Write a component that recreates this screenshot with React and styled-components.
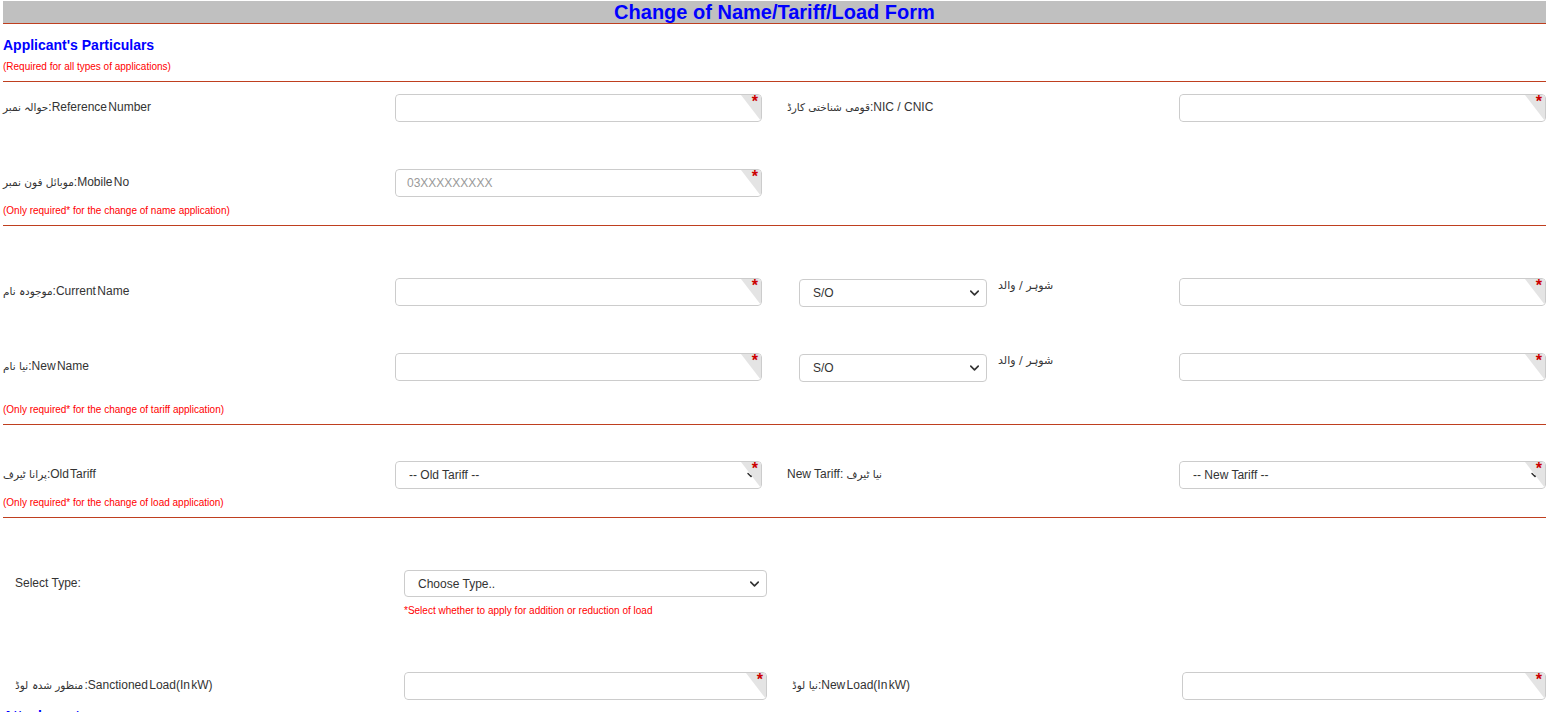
import React from 'react'
import styled, { createGlobalStyle } from 'styled-components'
import { ChevronDown } from 'lucide-react'

const Global = createGlobalStyle`
  body {
    margin: 0;
    background: #fff;
    font-family: "Liberation Sans", "DejaVu Sans", Arial, sans-serif;
    overflow: hidden;
  }
`

function App() {
  return (
    <>
      <Global />
      <Page>
        <TitleBar>Change of Name/Tariff/Load Form</TitleBar>
        <Heading $top={13}>Applicant's Particulars</Heading>
        <Note $top={7}>(Required for all types of applications)</Note>
        <Rule $top={8} />

        <Row $top={12}>
          <Label $tight><Urdu>حوالہ نمبر</Urdu>:Reference Number</Label>
          <Field />
          <Label><Urdu>قومی شناختی کارڈ</Urdu>:NIC / CNIC</Label>
          <Field />
        </Row>
        <Row $top={47}>
          <Label $tight><Urdu>موبائل فون نمبر</Urdu>:Mobile No</Label>
          <Field placeholder="03XXXXXXXXX" />
        </Row>
        <Note $top={8}>(Only required* for the change of name application)</Note>
        <Rule $top={8} />

        <Row $top={52}>
          <Label $tight><Urdu>موجودہ نام</Urdu>:Current Name</Label>
          <Field />
          <Relation />
          <Field />
        </Row>
        <Row $top={46}>
          <Label $tight><Urdu>نیا نام</Urdu>:New Name</Label>
          <Field />
          <Relation />
          <Field />
        </Row>
        <Note $top={22}>(Only required* for the change of tariff application)</Note>
        <Rule $top={8} />

        <Row $top={36}>
          <Label $tight><Urdu>پرانا ٹیرف</Urdu>:Old Tariff</Label>
          <Field select="-- Old Tariff --" />
          <Label>New Tariff: <Urdu>نیا ٹیرف</Urdu></Label>
          <Field select="-- New Tariff --" />
        </Row>
        <Note $top={8}>(Only required* for the change of load application)</Note>
        <Rule $top={8} />

        <LoadRow $top={52}>
          <Label $pad={12}>Select Type:</Label>
          <div>
            <SelectBox $w={363} $h={27}>
              <PlainSelect defaultValue="">
                <option value="">Choose Type..</option>
                <option>Addition of Load</option>
                <option>Reduction of Load</option>
              </PlainSelect>
              <Arrow><ChevronDown size={15} strokeWidth={2.6} /></Arrow>
            </SelectBox>
            <Note $top={8}>*Select whether to apply for addition or reduction of load</Note>
          </div>
        </LoadRow>
        <LoadRow $top={55}>
          <Label $pad={12} $tight><Urdu>منظور شدہ لوڈ</Urdu> :Sanctioned Load(In kW)</Label>
          <Field w={363} />
          <Label $tight><Urdu>نیا لوڈ</Urdu>:New Load(In kW)</Label>
          <Field w={364} />
        </LoadRow>
        <Heading $top={8}>Attachments</Heading>
      </Page>
    </>
  )
}

export default App

function Field({ placeholder, select, w = 367 }) {
  return (
    <FieldBox $w={w}>
      {select ? (
        <>
          <CornerSelect defaultValue="">
            <option value="">{select}</option>
          </CornerSelect>
          <SmallArrow><ChevronDown size={12} strokeWidth={3} /></SmallArrow>
        </>
      ) : (
        <TextInput placeholder={placeholder} />
      )}
      <Corner />
      <Star>*</Star>
    </FieldBox>
  )
}

function Relation() {
  return (
    <RelationCell>
      <SelectBox $w={188} $h={28}>
        <PlainSelect defaultValue="S/O">
          <option>S/O</option>
          <option>D/O</option>
          <option>W/O</option>
        </PlainSelect>
        <Arrow><ChevronDown size={15} strokeWidth={2.6} /></Arrow>
      </SelectBox>
      <Urdu $size={11}>شوہر / والد</Urdu>
    </RelationCell>
  )
}

const Page = styled.div`
  margin-left: 3px;
  width: 1543px;
`
const TitleBar = styled.div`
  margin-top: 1px;
  height: 22px;
  line-height: 22px;
  background: #c0c0c0;
  border-bottom: 1px solid #bf3f1f;
  text-align: center;
  color: #0000ff;
  font-size: 20px;
  font-weight: bold;
`
const Heading = styled.h3`
  margin: ${p => p.$top}px 0 0 0;
  font-size: 14px;
  line-height: 17px;
  font-weight: bold;
  color: #0000ff;
`
const Note = styled.div`
  margin-top: ${p => p.$top}px;
  font-size: 10px;
  line-height: 12px;
  color: #ff0000;
  white-space: nowrap;
`
const Rule = styled.div`
  margin-top: ${p => p.$top}px;
  height: 1px;
  background: #bf3f1f;
`
const Row = styled.div`
  display: grid;
  grid-template-columns: 392px 392px 392px 367px;
  align-items: start;
  margin-top: ${p => p.$top}px;
`
const LoadRow = styled(Row)`
  grid-template-columns: 401px 388px 390px 364px;
`
const Label = styled.div`
  padding: 5px 0 0 ${p => p.$pad || 0}px;
  font-size: 12px;
  line-height: 16px;
  color: #333;
  word-spacing: ${p => (p.$tight ? '-2px' : 'normal')};
  white-space: nowrap;
`
const Urdu = styled.span`
  font-family: "DejaVu Sans", sans-serif;
  font-size: ${p => p.$size || 10.5}px;
  color: #333;
  word-spacing: 0;
`
const FieldBox = styled.div`
  position: relative;
  width: ${p => p.$w}px;
  height: 28px;
  border-radius: 4px;
  overflow: hidden;
`
const TextInput = styled.input`
  box-sizing: border-box;
  width: 100%;
  height: 100%;
  border: 1px solid #ccc;
  border-radius: 4px;
  padding: 0 11px;
  font-family: "Liberation Sans", Arial, sans-serif;
  font-size: 12px;
  color: #555;
  outline: none;
  &::placeholder {
    color: #999;
  }
`
const CornerSelect = styled.select`
  appearance: none;
  box-sizing: border-box;
  width: 100%;
  height: 100%;
  border: 1px solid #ccc;
  border-radius: 4px;
  padding: 0 13px;
  background: #fff;
  font-family: "Liberation Sans", Arial, sans-serif;
  font-size: 12px;
  color: #333;
  outline: none;
`
const SmallArrow = styled.span`
  position: absolute;
  right: 5px;
  top: 8px;
  color: #333;
  display: flex;
`
const Corner = styled.div`
  position: absolute;
  top: 1px;
  right: 1px;
  width: 20px;
  height: 26px;
  background: #e4e4e4;
  clip-path: polygon(0 0, 100% 0, 100% 100%);
  border-top-right-radius: 3px;
`
const Star = styled.span`
  position: absolute;
  top: 0;
  right: 4px;
  color: #cc0000;
  font-size: 16px;
  font-weight: bold;
  line-height: 16px;
`
const RelationCell = styled.div`
  display: flex;
  align-items: flex-start;
  gap: 11px;
  padding-left: 12px;
  padding-top: 1px;
`
const SelectBox = styled.div`
  position: relative;
  width: ${p => p.$w}px;
  height: ${p => p.$h}px;
  flex-shrink: 0;
`
const PlainSelect = styled.select`
  appearance: none;
  box-sizing: border-box;
  width: 100%;
  height: 100%;
  border: 1px solid #ccc;
  border-radius: 4px;
  padding: 0 13px;
  background: #fff;
  font-family: "Liberation Sans", Arial, sans-serif;
  font-size: 12px;
  color: #333;
  outline: none;
`
const Arrow = styled.span`
  position: absolute;
  right: 5px;
  top: 50%;
  transform: translateY(-50%);
  display: flex;
  color: #333;
  pointer-events: none;
`
